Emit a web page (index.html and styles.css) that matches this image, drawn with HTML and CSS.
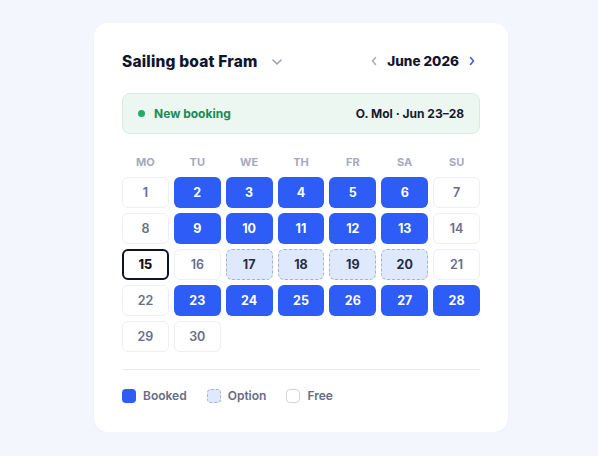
FILE: index.html
```html
<!DOCTYPE html>
<html>
<head>
<meta charset="utf-8">
<link rel="stylesheet" href="styles.css">
</head>
<body>
<div class="card">
  <div class="header">
    <div class="boat">
      <span class="title">Sailing boat Fram</span>
      <svg class="chev" width="12" height="8" viewBox="0 0 12 8"><path d="M2 2l4 4 4-4" fill="none" stroke="#9aa1bb" stroke-width="1.6" stroke-linecap="round" stroke-linejoin="round"/></svg>
    </div>
    <div class="month">
      <svg width="8" height="12" viewBox="0 0 8 12"><path d="M5.5 2.5L2.5 6l3 3.5" fill="none" stroke="#a7adc4" stroke-width="1.6" stroke-linecap="round" stroke-linejoin="round"/></svg>
      <span class="mtext">June 2026</span>
      <svg width="8" height="12" viewBox="0 0 8 12"><path d="M2.5 2.5L5.5 6l-3 3.5" fill="none" stroke="#3b5cf0" stroke-width="1.6" stroke-linecap="round" stroke-linejoin="round"/></svg>
    </div>
  </div>
  <div class="banner">
    <div class="nb"><span class="dot"></span>New booking</div>
    <div class="who">O. Mol · Jun 23–28</div>
  </div>
  <div class="weekdays">
    <span>MO</span><span>TU</span><span>WE</span><span>TH</span><span>FR</span><span>SA</span><span>SU</span>
  </div>
  <div class="grid">
    <div class="d free">1</div><div class="d booked">2</div><div class="d booked">3</div><div class="d booked">4</div><div class="d booked">5</div><div class="d booked">6</div><div class="d free">7</div>
    <div class="d free">8</div><div class="d booked">9</div><div class="d booked">10</div><div class="d booked">11</div><div class="d booked">12</div><div class="d booked">13</div><div class="d free">14</div>
    <div class="d today">15</div><div class="d free">16</div><div class="d option">17</div><div class="d option">18</div><div class="d option">19</div><div class="d option">20</div><div class="d free">21</div>
    <div class="d free">22</div><div class="d booked">23</div><div class="d booked">24</div><div class="d booked">25</div><div class="d booked">26</div><div class="d booked">27</div><div class="d booked">28</div>
    <div class="d free">29</div><div class="d free">30</div>
  </div>
  <div class="divider"></div>
  <div class="legend">
    <div class="li"><span class="sw sw-booked"></span>Booked</div>
    <div class="li"><span class="sw sw-option"></span>Option</div>
    <div class="li"><span class="sw sw-free"></span>Free</div>
  </div>
</div>
</body>
</html>
```
FILE: styles.css
```css
* { box-sizing: border-box; }
body {
  margin: 0;
  background: #f3f6fd;
  font-family: Inter, "Liberation Sans", sans-serif;
  padding: 23px 0 0 94px;
}
.card {
  width: 414px;
  height: 409px;
  background: #fff;
  border-radius: 14px;
  padding: 28px 28px 30px;
  box-shadow: 0 1px 3px rgba(30, 40, 90, 0.04);
}
.header {
  display: flex;
  justify-content: space-between;
  align-items: center;
  height: 20px;
}
.boat { display: flex; align-items: center; gap: 13px; }
.title {
  font-size: 15.5px;
  font-weight: 800;
  color: #12152e;
  letter-spacing: 0.2px;
}
.chev { margin-top: 2px; }
.month { display: flex; align-items: center; gap: 9px; padding-right: 4px; }
.mtext { font-size: 13.5px; font-weight: 800; color: #12152e; }
.banner {
  margin-top: 22px;
  height: 41px;
  background: #ebf7f0;
  border: 1px solid #d2eedd;
  border-radius: 8px;
  display: flex;
  align-items: center;
  justify-content: space-between;
  padding: 0 15px 0 15px;
}
.nb {
  display: flex;
  align-items: center;
  gap: 9px;
  color: #1b8a53;
  font-weight: 700;
  font-size: 12px;
}
.dot { width: 7px; height: 7px; border-radius: 50%; background: #1fae63; }
.who { font-size: 12px; font-weight: 700; color: #161a30; }
.weekdays {
  margin-top: 21px;
  display: grid;
  grid-template-columns: repeat(7, 1fr);
  column-gap: 5px;
  text-align: center;
  font-size: 11px;
  font-weight: 700;
  color: #a4aac2;
  line-height: 14px;
}
.grid {
  margin-top: 8px;
  display: grid;
  grid-template-columns: repeat(7, 1fr);
  grid-auto-rows: 31px;
  gap: 5px 5px;
}
.d {
  display: flex;
  align-items: center;
  justify-content: center;
  border-radius: 6px;
  font-size: 12.5px;
  font-weight: 700;
}
.free { background: #fff; border: 1px solid #eceff5; color: #676d8a; font-weight: 600; }
.booked { background: #2d5cf6; color: #fff; }
.option { background: #dfe9fd; border: 1px dashed #a6b3cf; color: #222b4a; }
.today { border: 2px solid #0f1326; color: #0f1326; font-weight: 800; }
.divider { margin-top: 17px; height: 1px; background: #e9ecf3; }
.legend {
  margin-top: 18px;
  display: flex;
  align-items: center;
  gap: 20px;
  font-size: 12px;
  font-weight: 600;
  color: #656b88;
}
.li { display: flex; align-items: center; gap: 7px; }
.sw { width: 14px; height: 14px; border-radius: 4px; display: inline-block; }
.sw-booked { background: #2d5cf6; }
.sw-option { background: #dfe9fd; border: 1px dashed #a6b3cf; }
.sw-free { background: #fff; border: 1px solid #cfd3de; }
```
